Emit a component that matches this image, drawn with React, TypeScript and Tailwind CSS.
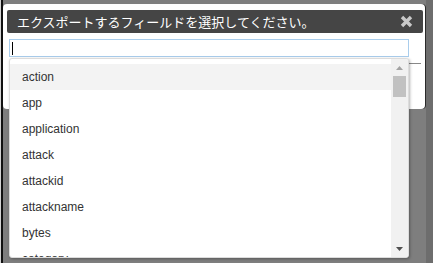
const fields = [
  "action",
  "app",
  "application",
  "attack",
  "attackid",
  "attackname",
  "bytes",
  "category",
];

const App = () => {
  return (
    <div className="relative w-[433px] h-[263px] overflow-hidden bg-[#7e7e7e] font-['Liberation_Sans',sans-serif]">
      {/* ----window edges---- */}
      <div className="absolute left-0 top-0 h-full w-[3px] border-l border-l-[#d4d4d4] bg-[#111]" />
      <div className="absolute right-0 top-0 h-full w-[7px] bg-[#6d6d6d]" />

      {/* ----dialog---- */}
      <div className="absolute left-[3px] top-[4px] w-[422px] h-[105px] bg-white rounded-[4px] shadow-[1px_0_0_#2a2a2a] pt-[6px] pl-[4px] pr-[2px]">
        <div className="flex items-center justify-between h-[23px] bg-[#454545] rounded-[2px] pl-[10px] pr-[10px]">
          <span className="text-white text-[13px] leading-none font-['Noto_Sans_CJK_JP',sans-serif]">
            エクスポートするフィールドを選択してください。
          </span>
          <svg width="13" height="13" viewBox="0 0 13 13">
            <path
              d="M2 2 L11 11 M11 2 L2 11"
              stroke="#c9c9c9"
              strokeWidth="3.4"
              fill="none"
            />
          </svg>
        </div>
        <div className="mt-[6px] ml-[2px] w-[400px] h-[18px] border border-[#a9cdec] flex items-center">
          <span className="ml-[2px] w-px h-[13px] bg-black" />
        </div>
        <div className="mt-[6px] ml-[2px] mr-[2px] h-px bg-[#888]" />
      </div>

      {/* ----dropdown---- */}
      <div className="absolute left-[9px] top-[58px] w-[400px] h-[200px] flex bg-white border border-[#dcdcdc] rounded-[3px] shadow-[1px_1px_3px_rgba(0,0,0,0.3)] overflow-hidden">
        <div className="flex-1 pt-[5px] overflow-hidden">
          {fields.map((f, i) => (
            <div
              key={f}
              className={`h-[26px] flex items-center pl-[12px] text-[12px] text-[#333] ${
                i === 0 ? "bg-[#f3f3f3]" : ""
              }`}
            >
              {f}
            </div>
          ))}
        </div>
        <div className="w-[17px] bg-[#f1f1f1] flex flex-col">
          <div className="h-[17px] flex items-center justify-center">
            <svg width="7" height="4" viewBox="0 0 7 4">
              <polygon points="3.5,0 7,4 0,4" fill="#a3a3a3" />
            </svg>
          </div>
          <div className="mx-[2px] h-[21px] bg-[#c1c1c1]" />
          <div className="flex-1" />
          <div className="h-[17px] flex items-center justify-center">
            <svg width="7" height="4" viewBox="0 0 7 4">
              <polygon points="0,0 7,0 3.5,4" fill="#505050" />
            </svg>
          </div>
        </div>
      </div>
    </div>
  );
};

export default App;
